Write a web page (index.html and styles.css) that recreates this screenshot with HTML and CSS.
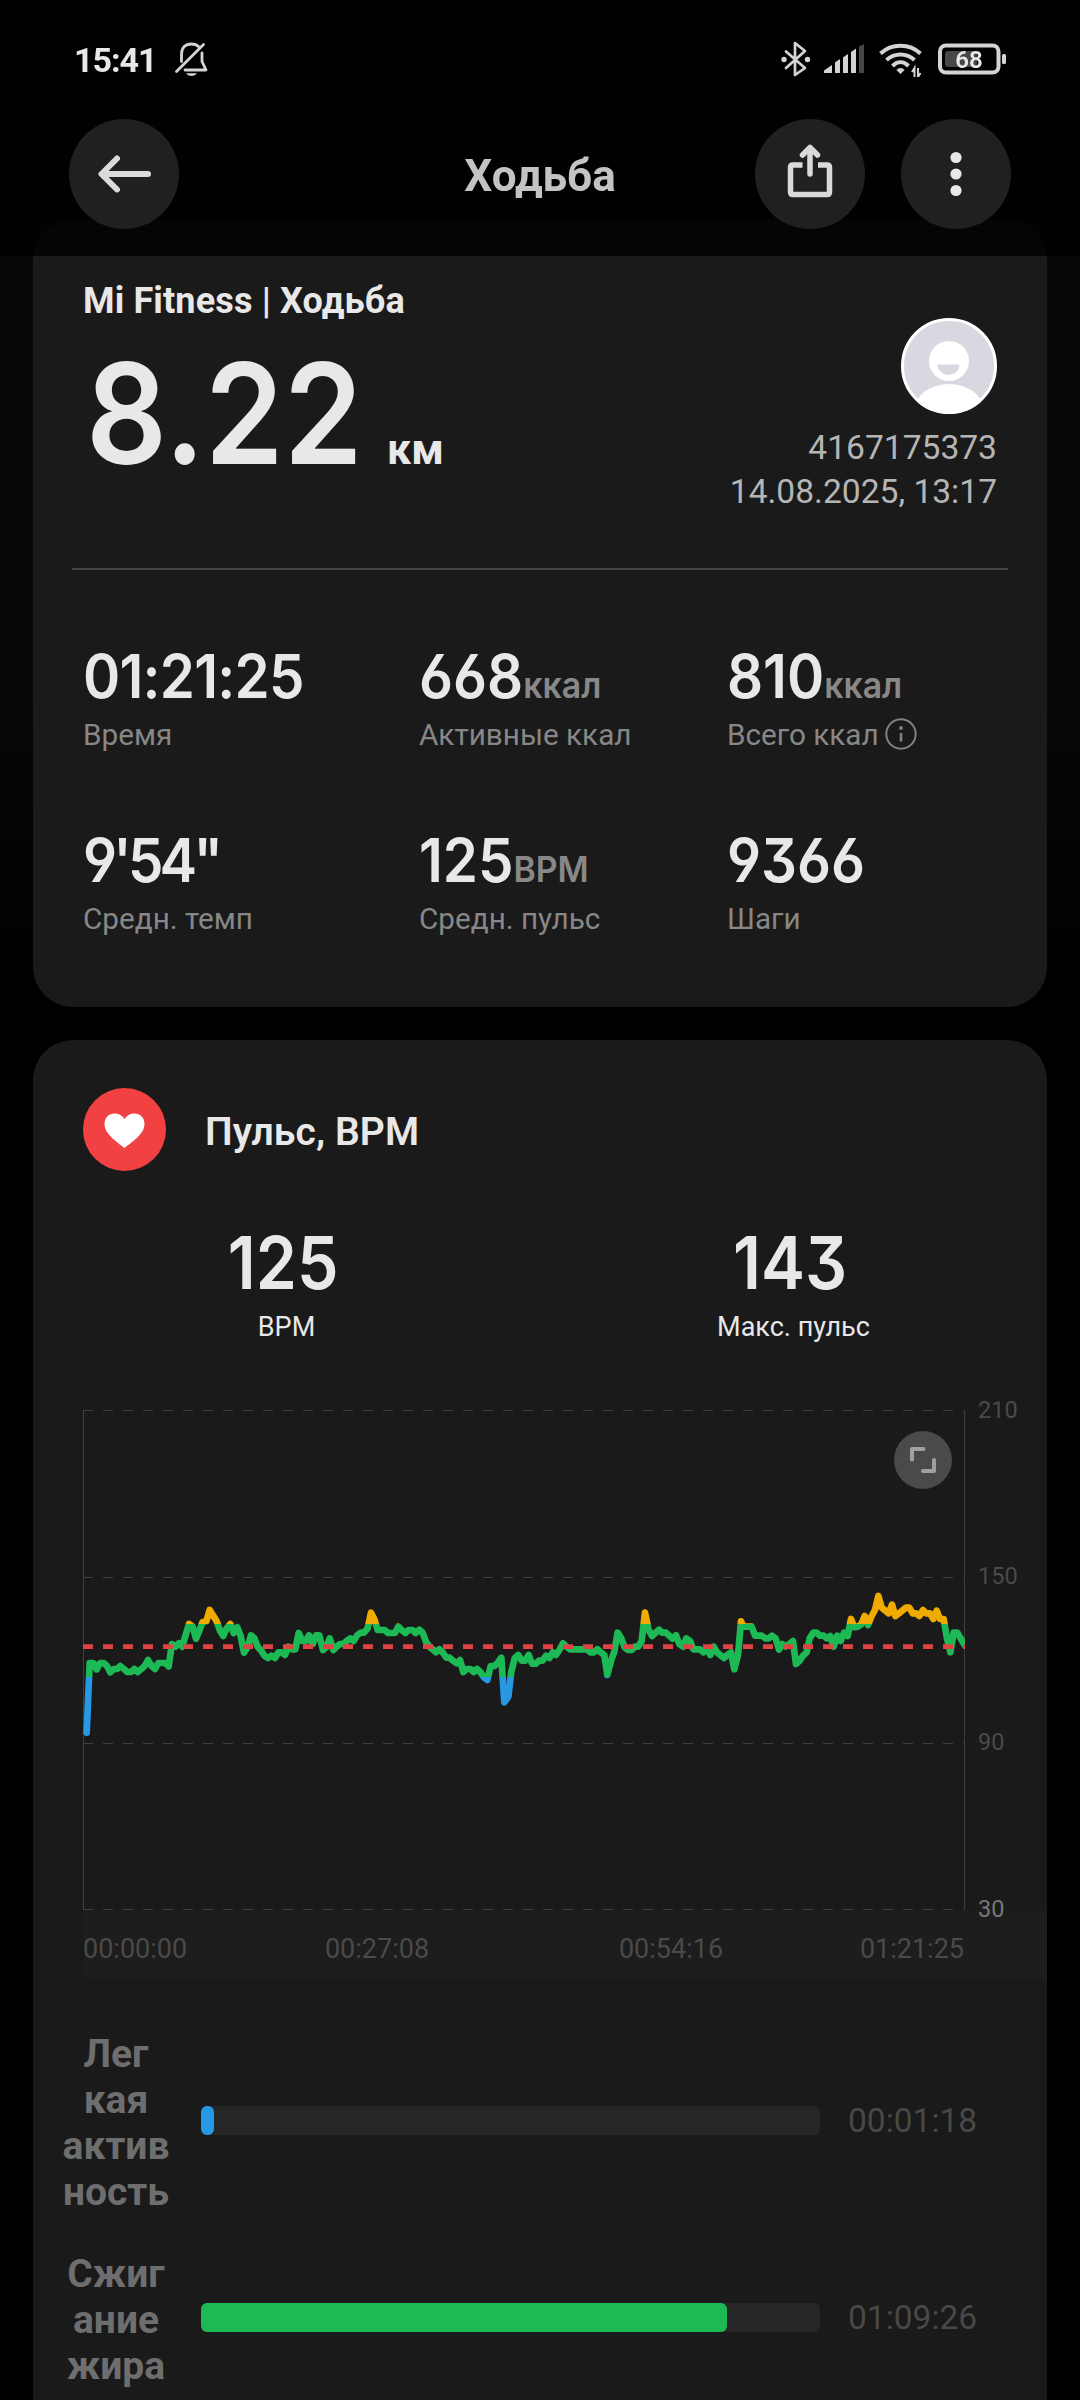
FILE: index.html
```html
<!DOCTYPE html>
<html lang="ru">
<head>
  <meta charset="UTF-8">
  <meta name="viewport" content="width=device-width, initial-scale=1.0">
  <title>Ходьба</title>
  <link rel="stylesheet" href="styles.css">
</head>
<body>
  <header class="header">
    <div class="status-bar">
      <span class="clock">15:41</span>
      <svg class="bell" width="34" height="36" viewBox="0 0 34 36" fill="none" stroke="#d4d4d4" stroke-width="2.8" stroke-linecap="round" stroke-linejoin="round">
        <path d="M7.500 20.500V13C7.500 6.500 11.500 3 17.500 3C20.500 3 23 4 24.500 5.500M28 12V20.500L32 29H11"/>
        <path d="M2.500 30.500L29.500 3.500"/>
        <path d="M12 32.300H23C21.500 34.200 19.800 35 17.500 35S13.500 34.200 12 32.300Z" fill="#d4d4d4" stroke="none"/>
      </svg>
      <div class="status-icons">
        <svg width="30" height="36" viewBox="0 0 30 36" fill="none" stroke="#d4d4d4" stroke-width="2.700" stroke-linejoin="round" stroke-linecap="round">
          <path d="M5 10.500L24 27L14 34V2L24 10L5 27"/>
          <circle cx="3" cy="18.500" r="2.700" fill="#d4d4d4" stroke="none"/>
          <circle cx="26.500" cy="18.500" r="2.700" fill="#d4d4d4" stroke="none"/>
        </svg>
        <svg class="signal" width="40" height="36" viewBox="0 0 40 36" fill="#d4d4d4">
          <path d="M0 32V29.500L8 24V32Z"/>
          <path d="M11 32V21.500L16 18V32Z"/>
          <path d="M19 32V16.500L24 13V32Z"/>
          <path d="M27 32V11L32 7.500V32Z"/>
          <path d="M35 32V5.500L40 3V32Z" fill="#474747"/>
        </svg>
        <svg class="wifi" width="44" height="36" viewBox="0 0 44 36" fill="none" stroke="#d4d4d4" stroke-width="4">
          <path d="M1.500 12.500C12.500 2 30.500 2 41.500 12.500"/>
          <path d="M7.500 19C15.500 11.500 27.500 11.500 35.500 19"/>
          <path d="M13.500 25C18.500 20 24.500 20 29.500 25"/>
          <path d="M21.500 33L17.500 29C19.500 26.300 23.500 26.300 25.500 29Z" fill="#d4d4d4" stroke="none"/>
          <path d="M35.500 36V27L33 31M39 27V36L41.500 32" stroke-width="2"/>
        </svg>
        <svg class="battery" width="70" height="36" viewBox="0 0 70 36">
          <rect x="2" y="4.500" width="58.500" height="27" rx="6" fill="none" stroke="#d4d4d4" stroke-width="4"/>
          <rect x="7" y="10" width="32" height="16" rx="3" fill="#474747"/>
          <rect x="64" y="13" width="4" height="10" rx="1.500" fill="#d4d4d4"/>
          <text class="battery-text" x="31" y="26.500" text-anchor="middle">68</text>
        </svg>
      </div>
    </div>
    <div class="toolbar">
      <button class="round-btn" aria-label="Назад">
        <svg width="110" height="110" viewBox="0 0 110 110" fill="none" stroke="#dadada" stroke-width="6" stroke-linecap="round" stroke-linejoin="round">
          <path d="M79 55H33M48 39.500L32.500 55L48 70.500"/>
        </svg>
      </button>
      <h1 class="page-title">Ходьба</h1>
      <button class="round-btn share" aria-label="Поделиться">
        <svg width="110" height="110" viewBox="0 0 110 110" fill="none" stroke="#dadada" stroke-width="5.500">
          <path d="M47.500 46H38Q35.500 46 35.500 48.500V73Q35.500 75.500 38 75.500H72Q74.500 75.500 74.500 73V48.500Q74.500 46 72 46H63"/>
          <path d="M55 55V29M47.500 36L55 28.500L62.500 36" stroke-linecap="round" stroke-linejoin="round"/>
        </svg>
      </button>
      <button class="round-btn" aria-label="Меню">
        <svg width="110" height="110" viewBox="0 0 110 110" fill="#e8e8e8">
          <circle cx="55" cy="38.500" r="5.600"/>
          <circle cx="55" cy="55" r="5.600"/>
          <circle cx="55" cy="71.500" r="5.600"/>
        </svg>
      </button>
    </div>
  </header>

  <main class="content">
    <section class="card">
      <div class="summary">
        <div>
          <h2 class="source">Mi Fitness | Ходьба</h2>
          <div class="distance">
            <span class="distance-value">8.22</span>
            <span class="distance-unit">км</span>
          </div>
        </div>
        <div class="user">
          <svg class="avatar" width="96" height="96" viewBox="0 0 96 96">
            <defs>
              <clipPath id="avatarClip"><circle cx="48" cy="48" r="48"/></clipPath>
            </defs>
            <circle cx="48" cy="48" r="46.500" fill="#d8d8e0" stroke="#fff" stroke-width="3"/>
            <circle cx="48" cy="43" r="20" fill="#fff"/>
            <path d="M36.500 46.500H58.500C58.500 60 36.500 60 36.500 46.500Z" fill="#d8d8e0"/>
            <ellipse cx="48" cy="91" rx="34" ry="25" fill="#fff" clip-path="url(#avatarClip)"/>
          </svg>
          <span>4167175373</span>
          <span>14.08.2025, 13:17</span>
        </div>
      </div>
      <hr class="divider">
      <div class="stats">
        <div>
          <div class="value time">01:21:25</div>
          <div class="label">Время</div>
        </div>
        <div>
          <div class="value">668<span class="unit">ккал</span></div>
          <div class="label">Активные ккал</div>
        </div>
        <div>
          <div class="value">810<span class="unit">ккал</span></div>
          <div class="label">Всего ккал
            <svg class="info" width="32" height="32" viewBox="0 0 32 32" fill="none" stroke="#828282" stroke-width="2">
              <circle cx="16" cy="16" r="14.700"/>
              <path d="M16 15V23.500" stroke-width="2.600"/>
              <circle cx="16" cy="10" r="1.900" fill="#828282" stroke="none"/>
            </svg>
          </div>
        </div>
        <div>
          <div class="value pace">9'54"</div>
          <div class="label">Средн. темп</div>
        </div>
        <div>
          <div class="value">125<span class="unit">BPM</span></div>
          <div class="label">Средн. пульс</div>
        </div>
        <div>
          <div class="value">9366</div>
          <div class="label">Шаги</div>
        </div>
      </div>
    </section>

    <section class="card pulse">
      <div class="pulse-head">
        <svg width="83" height="83" viewBox="0 0 83 83">
          <circle cx="41.500" cy="41.500" r="41.500" fill="#f14142"/>
          <path d="M41.500 60C35 54.500 21.500 46.500 21.500 36C21.500 29.500 26 25.500 31.500 25.500C36 25.500 39.500 27.500 41.500 31C43.500 27.500 47 25.500 51.500 25.500C57 25.500 61.500 29.500 61.500 36C61.500 46.500 48 54.500 41.500 60Z" fill="#fff"/>
        </svg>
        <h2 class="pulse-title">Пульс, BPM</h2>
      </div>
      <div class="scores">
        <div class="score">
          <span class="score-value">125</span>
          <span class="score-label">BPM</span>
        </div>
        <div class="score">
          <span class="score-value">143</span>
          <span class="score-label">Макс. пульс</span>
        </div>
      </div>

      <svg class="chart" width="1014" height="583" viewBox="0 0 1014 583">
        <defs>
          <!-- heart rate zones: orange / green / blue -->
          <linearGradient id="zones" gradientUnits="userSpaceOnUse" x1="0" y1="0" x2="0" y2="600">
            <stop offset="0.320" stop-color="#f0ab00"/>
            <stop offset="0.320" stop-color="#1db954"/>
            <stop offset="0.5833" stop-color="#1db954"/>
            <stop offset="0.5833" stop-color="#2798e4"/>
          </linearGradient>
          <clipPath id="plot"><rect x="50" y="0" width="882" height="520"/></clipPath>
        </defs>
        <rect x="51" y="516" width="963" height="67" fill="#1d1d1d"/>
        <g stroke="#3f3f3f" stroke-width="1" fill="none">
          <path d="M50.500 15.500V514.500M931.500 15.500V514.500"/>
          <path d="M50 15.500H931M50 182.500H931M50 348.500H931M50 514.500H931" stroke-dasharray="10 10"/>
        </g>
        <g clip-path="url(#plot)">
          <polyline transform="translate(37 165) scale(0.33333)" fill="none" stroke="url(#zones)" stroke-width="20" stroke-linejoin="round" stroke-linecap="round" points="
            50,518 59,309 70,309 80,328 90,309 101,309 111,318 121,337 131,327 141,327 151,318 162,327 172,336 183,336 193,327 203,336 214,327 224,318 234,300 245,318 255,327 265,309 276,309 286,309 296,319
            306,252 316,260 327,250 337,260 347,225 357,192 368,200 378,236 388,212 398,186 409,184 419,150 430,168 440,184 450,212 460,228 470,205 481,192 491,219 502,202 512,228 522,278 533,260 543,226 553,235
            563,260 574,272 584,288 594,294 604,287 615,294 625,277 635,277 645,285 655,260 666,268 676,268 686,219 697,243 707,243 717,226 728,252 738,226 748,226 759,270 770,260 779,235 790,270 800,260 810,252
            820,252 830,243 841,235 851,243 861,226 872,218 882,218 893,205 903,158 913,178 923,210 933,210 944,210 954,219 964,219 975,219 985,200 995,210 1006,219 1016,210 1027,210 1037,219 1048,209 1058,218
            1068,245 1078,260 1088,268 1098,277 1108,268 1118,277 1129,293 1139,293 1149,302 1160,310 1170,300 1180,336 1190,327 1201,327 1211,336 1221,327 1231,336 1242,352 1252,360 1262,318 1273,318 1283,309
            1294,293 1303,427 1315,410 1324,335 1334,295 1345,285 1355,302 1365,302 1376,285 1386,311 1397,311 1407,302 1417,302 1428,287 1438,294 1448,277 1458,285 1468,270 1479,250 1489,260 1500,268 1510,268
            1520,268 1530,268 1541,268 1551,268 1561,277 1572,277 1582,268 1592,277 1603,285 1612,345 1623,303 1633,275 1643,218 1654,235 1664,262 1674,270 1685,270 1695,260 1705,260 1715,243 1725,158 1736,210
            1746,228 1756,219 1767,209 1777,218 1788,218 1798,227 1808,236 1818,226 1828,252 1839,260 1849,235 1860,243 1870,268 1880,268 1890,268 1900,277 1911,268 1921,285 1931,260 1941,277 1952,286 1962,294
            1972,285 1983,277 1993,328 2004,285 2013,184 2020,200 2034,200 2045,200 2055,227 2065,227 2075,227 2086,235 2096,235 2106,227 2117,235 2127,269 2137,252 2147,260 2158,252 2169,243 2178,312 2188,303
            2199,287 2210,277 2219,235 2230,218 2240,218 2250,227 2261,227 2271,235 2281,228 2291,260 2302,227 2312,243 2322,218 2333,228 2343,177 2353,202 2363,200 2374,193 2384,168 2394,195 2405,168 2415,150
            2425,108 2435,143 2446,152 2456,160 2466,134 2476,168 2487,160 2497,152 2508,143 2518,143 2528,160 2538,160 2548,168 2559,150 2569,160 2580,160 2590,177 2600,152 2610,177 2621,177 2631,235 2641,277
            2651,218 2662,218 2672,235 2684,255"/>
          <path d="M50 251.600H932" stroke="#e04343" stroke-width="4.600" stroke-dasharray="10 10"/>
        </g>
        <g class="axis">
          <text x="945" y="23">210</text>
          <text x="945" y="189">150</text>
          <text x="945" y="355">90</text>
          <text x="945" y="522">30</text>
        </g>
        <g class="axis time-axis">
          <text x="50" y="563">00:00:00</text>
          <text x="344" y="563" text-anchor="middle">00:27:08</text>
          <text x="638" y="563" text-anchor="middle">00:54:16</text>
          <text x="931" y="563" text-anchor="end">01:21:25</text>
        </g>
        <circle cx="890" cy="65" r="29" fill="#4a4a4a"/>
        <path d="M879 64.500V54H890.500M890 76H901V65" fill="none" stroke="#a0a0a0" stroke-width="4" stroke-linecap="round" stroke-linejoin="round"/>
      </svg>

      <div class="zones">
        <div class="zone">
          <div class="zone-name">Лег<br>кая<br>актив<br>ность</div>
          <div class="track"><div class="fill light" style="width: 2.1%"></div></div>
          <div class="zone-time">00:01:18</div>
        </div>
        <div class="zone">
          <div class="zone-name">Сжиг<br>ание<br>жира</div>
          <div class="track"><div class="fill fat" style="width: 85%"></div></div>
          <div class="zone-time">01:09:26</div>
        </div>
      </div>
    </section>
  </main>
</body>
</html>
```

FILE: styles.css
```css
* {
  box-sizing: border-box;
}
body {
  margin: 0;
  height: 2400px;
  overflow: hidden;
  background: linear-gradient(#060707 0, #060707 700px, #000 1000px);
  font-family: Roboto, "Noto Sans", sans-serif;
  color: #e8e8e8;
}
h1, h2 {
  margin: 0;
}

/* header lies over the scrolled cards */
.header {
  position: fixed;
  top: 0;
  left: 0;
  z-index: 2;
  width: 100%;
  height: 256px;
  background: rgba(0, 0, 0, 0.78);
}
.status-bar {
  display: flex;
  height: 119px;
  padding: 41px 72px 0 74px;
}
.clock {
  width: 84px;
  font-size: 34px;
  font-weight: 700;
  line-height: 38px;
  letter-spacing: -1px;
}
.bell {
  margin-left: 16px;
}
.status-icons {
  display: flex;
  margin-left: auto;
}
.signal {
  margin-left: 13px;
}
.wifi {
  margin-left: 15px;
}
.battery {
  margin-left: 15px;
}
.battery-text {
  fill: #e8e8e8;
  font-size: 24px;
  font-weight: 600;
}
.toolbar {
  display: flex;
  align-items: center;
  height: 110px;
  padding: 0 69px;
}
.round-btn {
  width: 110px;
  height: 110px;
  padding: 0;
  border: none;
  border-radius: 50%;
  background: #202020;
}
.round-btn svg {
  display: block;
}
.page-title {
  flex: 1;
  padding: 3px 0 0 146px;
  text-align: center;
  font-size: 44px;
  font-weight: 700;
  color: #c3c3c3;
}
.share {
  margin-right: 36px;
}

.content {
  height: 2400px;
  overflow: hidden;
  padding: 219px 33px 0;
}
.card {
  height: 788px;
  border-radius: 40px;
  background: #1a1a1a;
}

.summary {
  display: flex;
  justify-content: space-between;
  height: 349px;
  padding: 60px 50px 0;
}
.source {
  font-size: 36px;
  font-weight: 700;
  line-height: 44px;
  letter-spacing: 0.15px;
}
.distance {
  display: flex;
  align-items: baseline;
  margin-top: 19px;
}
.distance-value {
  width: 301px;
  margin-left: 3px;
  font-family: Inter, sans-serif;
  font-size: 140px;
  font-weight: 600;
  line-height: 142px;
  transform: scaleX(0.905);
  transform-origin: left;
}
.distance-unit {
  font-size: 43px;
  font-weight: 700;
}
.user {
  display: flex;
  flex-direction: column;
  align-items: flex-end;
  padding-top: 39px;
  font-size: 33.6px;
  line-height: 44px;
  color: #b5b5b5;
}
.avatar {
  margin-bottom: 12px;
}
.divider {
  height: 2px;
  margin: 0 39px;
  border: none;
  background: #454545;
}

.stats {
  display: grid;
  grid-template-columns: 336px 308px 1fr;
  row-gap: 77px;
  padding: 76px 20px 0 50px;
}
.value {
  height: 60px;
  font-family: Inter, sans-serif;
  font-size: 60px;
  font-weight: 600;
  line-height: 60px;
  font-feature-settings: "cv03", "cv04", "cv09";
  white-space: nowrap;
  transform: scaleX(0.94);
  transform-origin: left;
}
.time {
  letter-spacing: -0.8px;
}
.pace {
  letter-spacing: -4px;
}
.unit {
  font-size: 36px;
  line-height: 1;
  color: #888;
}
.label {
  display: flex;
  align-items: center;
  height: 36px;
  margin-top: 11px;
  font-size: 29.7px;
  line-height: 36px;
  color: #878787;
}
.info {
  margin: -3px 0 0 6px;
}

.pulse {
  height: 1500px;
  margin-top: 33px;
  padding-top: 48px;
}
.pulse-head {
  display: flex;
  align-items: center;
  gap: 39px;
  padding-left: 50px;
}
.pulse-title {
  padding-top: 5px;
  font-size: 39px;
  font-weight: 600;
  letter-spacing: 0.1px;
}
.scores {
  display: flex;
  margin-top: 55px;
}
.score {
  flex: 1;
  display: flex;
  flex-direction: column;
  align-items: center;
}
.score-value {
  margin-right: 6px;
  font-family: Inter, sans-serif;
  font-size: 73px;
  font-weight: 600;
  line-height: 73px;
  font-feature-settings: "cv09";
  transform: scaleX(0.905);
}
.score-label {
  margin-top: 12px;
  font-size: 27px;
  line-height: 32px;
}

.chart {
  display: block;
  margin-top: 52px;
}
.axis text {
  font-size: 23.5px;
  fill: #4a4a4a;
}
.axis text:last-child {
  fill: #777;
}
.time-axis text, .time-axis text:last-child {
  font-size: 27px;
  fill: #4a4a4a;
}

.zones {
  display: flex;
  flex-direction: column;
  gap: 30px;
  padding: 47px 0 0 28px;
}
.zone {
  display: flex;
  align-items: center;
}
.zone-name {
  width: 110px;
  margin-right: 30px;
  padding-top: 6px;
  text-align: center;
  font-size: 39px;
  font-weight: 700;
  line-height: 46px;
  color: #6e6e6e;
}
.track {
  width: 619px;
  height: 29px;
  border-radius: 6px;
  background: #262626;
}
.fill {
  height: 100%;
  border-radius: 6px;
}
.light {
  background: #2798e4;
}
.fat {
  background: #1db954;
}
.zone-time {
  margin-left: 28px;
  padding-top: 1px;
  font-size: 33.5px;
  color: #484848;
}
```
